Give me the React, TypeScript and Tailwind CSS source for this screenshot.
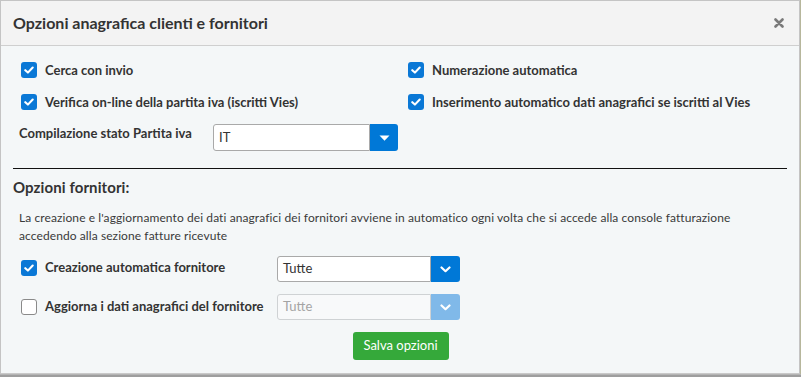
import React from "react";

function CheckBox({ checked }: { checked: boolean }) {
  if (!checked) {
    return (
      <span className="w-[16px] h-[16px] shrink-0 rounded-[3px] border border-[#8a8a8a] bg-white" />
    );
  }
  return (
    <span className="w-[16px] h-[16px] shrink-0 rounded-[3px] bg-[#0a78d6] flex items-center justify-center">
      <svg width="10" height="8" viewBox="0 0 10 8">
        <path d="M1.3 4.2 L3.9 6.6 L8.7 1.5" fill="none" stroke="white" strokeWidth="2.1" strokeLinecap="round" strokeLinejoin="round" />
      </svg>
    </span>
  );
}

function CheckRow({ checked, label }: { checked: boolean; label: string }) {
  return (
    <div className="flex items-center h-[16px] gap-[8px]">
      <CheckBox checked={checked} />
      <span className="text-[13px] font-bold text-[#333] leading-[16px] whitespace-nowrap">{label}</span>
    </div>
  );
}

function Chevron({ color }: { color: string }) {
  return (
    <svg width="11" height="7" viewBox="0 0 11 7">
      <path d="M1.5 1.5 L5.5 5.2 L9.5 1.5" fill="none" stroke={color} strokeWidth="2.2" strokeLinecap="round" strokeLinejoin="round" />
    </svg>
  );
}

export default function App() {
  return (
    <div className="w-[801px] h-[377px] bg-[#a3a3a3] flex flex-col font-[Lato,sans-serif] overflow-hidden">
      <div className="flex h-[374px]">
        <div className="w-[800px] h-[374px] border border-[#c4c4c4] border-b-[#c9c9c9] bg-[#f4f7f8] flex flex-col">
          {/* header */}
          <div className="h-[45px] bg-[#f3f3f3] border-b border-[#cfcfcf] flex items-center justify-between pl-[12px] pr-[15px] shrink-0">
            <span className="text-[16px] leading-[20px] font-bold text-[#333]">Opzioni anagrafica clienti e fornitori</span>
            <svg width="10" height="10" viewBox="0 0 10 10">
              <path d="M1.5 1.5 L8.5 8.5 M8.5 1.5 L1.5 8.5" stroke="#7a7a7a" strokeWidth="2.6" strokeLinecap="round" />
            </svg>
          </div>

          {/* body */}
          <div className="px-[12px] flex flex-col">
            <div className="flex pt-[16px] pl-[8px]">
              <div className="w-[387px] flex flex-col gap-[16px]">
                <CheckRow checked label="Cerca con invio" />
                <CheckRow checked label="Verifica on-line della partita iva (iscritti Vies)" />
              </div>
              <div className="flex flex-col gap-[16px]">
                <CheckRow checked label="Numerazione automatica" />
                <CheckRow checked label="Inserimento automatico dati anagrafici se iscritti al Vies" />
              </div>
            </div>

            <div className="flex items-center mt-[14px] pl-[6px] h-[27px]">
              <span className="w-[194px] text-[13px] leading-[16px] font-bold text-[#333] pb-[10px]">Compilazione stato Partita iva</span>
              <div className="flex h-[27px] w-[185px]">
                <div className="flex-1 bg-white border border-[#a9a9a9] rounded-l-[3px] flex items-center pl-[5px] text-[13px] text-[#333]">IT</div>
                <div className="w-[28px] bg-[#0078d7] rounded-r-[3px] flex items-center justify-center">
                  <svg width="11" height="6" viewBox="0 0 11 6">
                    <path d="M0.5 0.5 L10.5 0.5 L5.5 5.8 Z" fill="white" />
                  </svg>
                </div>
              </div>
            </div>

            <div className="mt-[17px] h-px bg-[#111]" />

            <div className="mt-[8px] h-[20px] flex items-center text-[15px] font-bold text-[#333] tracking-[0.1px]">Opzioni fornitori:</div>

            <p className="mt-[12px] pl-[6px] text-[12px] leading-[18px] text-[#3a3a3a] whitespace-nowrap tracking-[0.09px]">
              La creazione e l'aggiornamento dei dati anagrafici dei fornitori avviene in automatico ogni volta che si accede alla console fatturazione
              <br />
              accedendo alla sezione fatture ricevute
            </p>

            <div className="flex items-center mt-[11px] pl-[8px] h-[26px]">
              <div className="w-[256px] flex items-center gap-[8px] pb-[2px]">
                <CheckBox checked />
                <span className="text-[13px] leading-[16px] font-bold text-[#333] pb-[2px]">Creazione automatica fornitore</span>
              </div>
              <div className="flex h-[26px] w-[183px]">
                <div className="flex-1 bg-white border border-[#a9a9a9] rounded-l-[3px] flex items-center pl-[5px] text-[13px] text-[#333]">Tutte</div>
                <div className="w-[29px] bg-[#0078d7] rounded-r-[3px] flex items-center justify-center">
                  <Chevron color="white" />
                </div>
              </div>
            </div>

            <div className="flex items-center mt-[12px] pl-[8px] h-[26px]">
              <div className="w-[256px] flex items-center gap-[8px] pb-[1px]">
                <CheckBox checked={false} />
                <span className="text-[13px] leading-[16px] font-bold text-[#333] pb-[2px]">Aggiorna i dati anagrafici del fornitore</span>
              </div>
              <div className="flex h-[26px] w-[183px]">
                <div className="flex-1 bg-[#f8f9fa] border border-[#cfd2d4] rounded-l-[3px] flex items-center pl-[5px] text-[13px] text-[#a4a4a4]">Tutte</div>
                <div className="w-[29px] bg-[#80b9e9] rounded-r-[3px] flex items-center justify-center">
                  <Chevron color="white" />
                </div>
              </div>
            </div>

            <div className="flex justify-center mt-[12px]">
              <button className="w-[96px] h-[28px] bg-[#35a93a] rounded-[3px] text-white text-[13px] ml-[1px]">Salva opzioni</button>
            </div>
          </div>
        </div>
        <div className="flex-1 bg-[#b7b79c]" />
      </div>
      <div className="flex-1 bg-[#9e9e9e] border-t border-[#b5b5b5]" />
    </div>
  );
}
